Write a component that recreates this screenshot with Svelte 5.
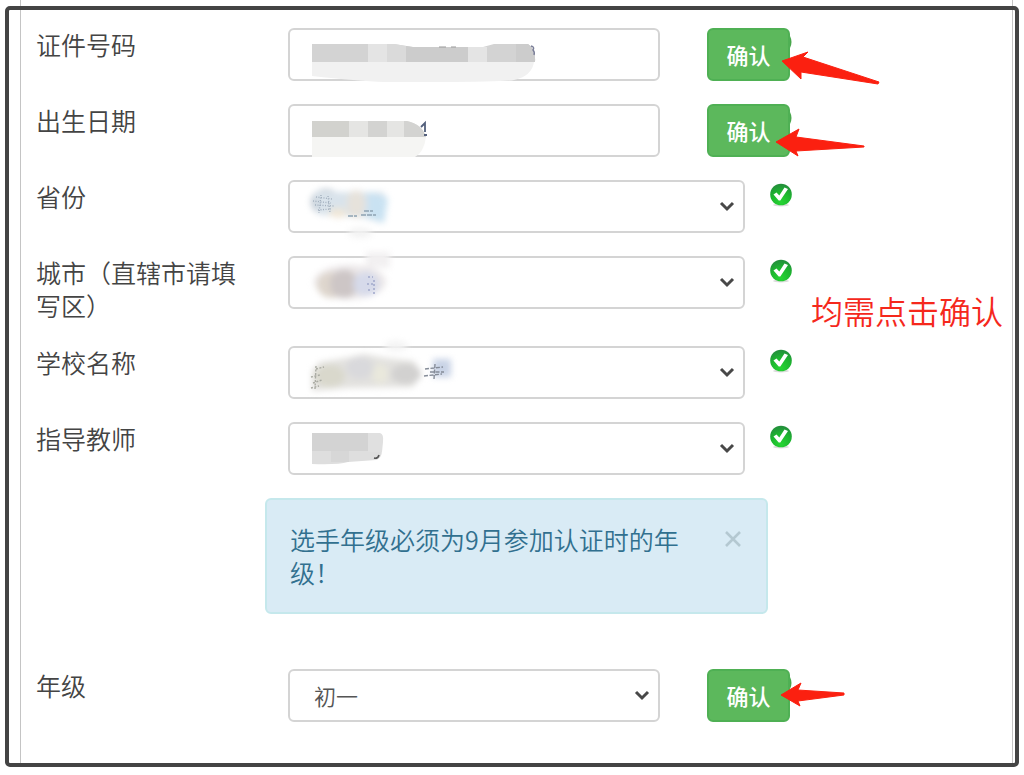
<script>
	const rows = [
		{
			id: 'cert',
			label: '证件号码',
			type: 'input',
			smudge: 'cert',
			arrow: 'M75 33 L101 24 L96 29 L172 54 L171 56 L94 44 L94 51 Z'
		},
		{
			id: 'birth',
			label: '出生日期',
			type: 'input',
			smudge: 'birth',
			arrow: 'M69 38 L92 25 L89 33 L157 42 L157 43 L89 47 L91 52 Z'
		},
		{id: 'province', label: '省份', type: 'select', smudge: 'province'},
		{id: 'city', label: '城市（直辖市请填写区）', type: 'select', smudge: 'city'},
		{id: 'school', label: '学校名称', type: 'select', smudge: 'school'},
		{id: 'teacher', label: '指导教师', type: 'select', smudge: 'teacher'}
	];

	const gradeArrow = 'M74 26 L94 14 L91 21 L137 24 L137 26 L91 32 L93 37 Z';
	const grades = ['初一', '初二', '初三'];

	let grade = '初一';
	let showNotice = true;
</script>

{#snippet chevron()}
	<svg class="chevron" viewBox="0 0 16 11" aria-hidden="true">
		<path d="M2 2 L8 8 L14 2" fill="none" stroke="#484848" stroke-width="3" />
	</svg>
{/snippet}

{#snippet confirm(arrow)}
	<div class="action">
		<button type="button" class="confirm">确认</button>
		<svg class="arrow" viewBox="0 0 180 60" aria-hidden="true">
			<path d="M83 8 Q86 14 83 20 Z" fill="#48a64b" />
			<path d={arrow} fill="#fb2010" stroke="#fb2010" stroke-width="1" stroke-linejoin="round" />
		</svg>
	</div>
{/snippet}

{#snippet smudge(name)}
	<svg class="smudge" viewBox="0 0 280 60" aria-hidden="true">
		{#if name === 'cert'}
			<path d="M24 34 H246 Q244 48 226 52 Q218 54 150 54 H96 Q70 53 24 48 Z" fill="#f1f1f1" />
			<path d="M24 16 H106 L125 19 H195 L206 16 H240 Q248 21 247 34 H24 Z" fill="#d3d3d3" />
			<path d="M80 16 H99 V34 H80 Z M180 19 H199 V34 H180 Z" fill="#e4e4e4" />
			<path d="M99 16 H106 L118 18 V34 H99 Z" fill="#dadada" />
			<path d="M118 18 L125 19 H180 V34 H118 Z M228 16 H240 Q248 21 247 34 H228 Z" fill="#cccccc" />
			<path d="M151 19 H158 M163 19 H168" stroke="#999" />
			<path d="M243 18 Q247 19 245 22 Q247 24 246 27" fill="none" stroke="#7a7e98" stroke-width="1.4" />
		{:else if name === 'birth'}
			<path d="M24 33 H138 Q136 48 127 53 H24 Z" fill="#f5f5f3" />
			<path d="M24 17 H119 Q134 20 138 33 H24 Z" fill="#e5e5e3" />
			<path d="M24 17 H61 V33 H24 Z" fill="#d2d2ce" />
			<path d="M80 17 H99 V33 H80 Z M116 17 H119 Q134 20 138 33 H116 Z" fill="#d3d3d1" />
			<path d="M133 23 L137 19 V28 M136 31 H139" fill="none" stroke="#53607c" stroke-width="1.8" />
		{:else if name === 'province'}
			<g class="haze">
				<ellipse cx="38" cy="22" rx="15" ry="13" fill="#c0cad4" />
				<path d="M27 12 H95 L99 20 L95 43 L76 38 L30 34 Z" fill="#d9e3eb" />
				<path d="M80 12 L100 18 L96 43 L80 37 Z" fill="#c9e2f2" />
				<ellipse cx="68" cy="24" rx="9" ry="14" fill="#e6e2db" />
				<ellipse cx="50" cy="33" rx="9" ry="5" fill="#f0e7d8" />
				<ellipse cx="72" cy="53" rx="12" ry="5" fill="#f2f2f2" />
			</g>
			<path d="M28 17 L44 19 M25 21 L43 23 M27 25 L46 26 M30 30 L43 29 M33 15 L31 33 M40 16 L42 32" stroke="#a3b0be" stroke-width="1.4" stroke-dasharray="1 1.5" />
			<path d="M60 36 H69 M73 35 H88 M76 31 H85" stroke="#8da2b3" stroke-width="1.6" stroke-dasharray="5 1" />
		{:else if name === 'city'}
			<g class="haze">
				<rect x="78" y="-4" width="24" height="16" fill="#f2f0f1" />
				<ellipse cx="62" cy="26" rx="36" ry="17" fill="#ebe7e8" />
				<ellipse cx="44" cy="29" rx="15" ry="13" fill="#ded6cd" />
				<ellipse cx="56" cy="28" rx="14" ry="14" fill="#cdc6c6" />
				<ellipse cx="78" cy="28" rx="13" ry="12" fill="#d6daea" />
			</g>
			<path d="M80 21 H85 M79 28 H87 M80 34 H84 M86 24 V38" stroke="#a3abcc" stroke-width="1.6" stroke-dasharray="2 2" />
		{:else if name === 'school'}
			<g class="haze">
				<path d="M24 25 L32 16 L58 12 L76 8 L98 12 L126 15 L133 28 L125 41 L60 42 L24 45 Z" fill="#e2e1de" />
				<ellipse cx="42" cy="30" rx="15" ry="11" fill="#d9d8cc" />
				<ellipse cx="72" cy="22" rx="14" ry="11" fill="#d9d9dc" />
				<ellipse cx="92" cy="28" rx="8" ry="10" fill="#e9e8dc" />
				<ellipse cx="118" cy="28" rx="15" ry="10" fill="#d2d1d0" />
				<rect x="145" y="13" width="18" height="18" fill="#c9d3e6" />
				<ellipse cx="108" cy="0" rx="12" ry="5" fill="#f3f3f3" />
			</g>
			<path d="M23 31 L32 29 M25 37 L34 34 M28 23 L36 21 M23 42 L31 40 M28 20 L27 43" stroke="#aaaba3" stroke-width="1.4" stroke-dasharray="2 1.5" />
			<path d="M137 23 L155 21 M142 26 H156 M136 30 L154 28 M147 18 L146 33" stroke="#858c98" stroke-width="1.4" stroke-dasharray="4 1.5" />
		{:else if name === 'teacher'}
			<path d="M24 28 H94 Q94 36 88 38 L60 40 Q50 43 24 42 Z" fill="#dedede" />
			<path d="M24 11 H80 V29 H24 Z" fill="#d3d3d3" />
			<path d="M80 11 H92 Q96 12 95 20 L94 30 H80 Z" fill="#e0e0e0" />
			<path d="M43 29 H61 V40 H43 Z" fill="#d7d7d7" />
			<path d="M86 36 Q90 37 91 33" fill="none" stroke="#555" stroke-width="1.6" />
		{/if}
	</svg>
{/snippet}

<div class="page">
	<form class="panel">
		{#each rows as row (row.id)}
			<div class="row" class:wide={row.type === 'select'}>
				<label for={row.id}>{row.label}</label>
				<div class="field">
					{#if row.type === 'input'}
						<input type="text" id={row.id}>
					{:else}
						<select id={row.id}>
							<option value=""></option>
						</select>
						{@render chevron()}
					{/if}
					{@render smudge(row.smudge)}
				</div>

				{#if row.arrow}
					{@render confirm(row.arrow)}
				{:else}
					<svg class="ok" viewBox="0 0 24 24" role="img" aria-label="OK">
						<defs>
							<radialGradient id="ok-{row.id}" cx="50%" cy="85%" r="80%">
								<stop offset="0" stop-color="#25d532" />
								<stop offset="0.6" stop-color="#1db52f" />
								<stop offset="1" stop-color="#23903b" />
							</radialGradient>
						</defs>
						<ellipse cx="12" cy="22" rx="8" ry="1.5" fill="#dcdcdc" />
						<circle cx="12" cy="11.5" r="10.8" fill="url(#ok-{row.id})" />
						<path d="M4.5 11.5 L7.5 9.5 L10.3 12.6 L15.5 4.5 L19 6 L11.3 17.5 L9.7 17.5 Z" fill="#fff" />
					</svg>
				{/if}
			</div>
		{/each}

		{#if showNotice}
			<div class="notice_row">
				<div class="notice" role="alert">
					<p>选手年级必须为9月参加认证时的年级！</p>
					<button type="button" class="close" aria-label="Close" on:click={() => showNotice = false}>
						<svg viewBox="0 0 16 16" aria-hidden="true">
							<path d="M1 1 L15 15 M15 1 L1 15" stroke="#b4c8d1" stroke-width="2.6" />
						</svg>
					</button>
				</div>
			</div>
		{/if}

		<div class="row">
			<label for="grade">年级</label>
			<div class="field">
				<select id="grade" bind:value={grade}>
					{#each grades as item}
						<option value={item}>{item}</option>
					{/each}
				</select>
				{@render chevron()}
			</div>
			{@render confirm(gradeArrow)}
		</div>
	</form>

	<div class="frame"></div>
	<p class="hint">均需点击确认</p>
</div>

<style>
	:global(body) {
		margin: 0;
		background: #fff;
	}

	.page {
		position: relative;
		padding: 0 11px 12px 20px;
		font-family: "Noto Sans CJK SC", sans-serif;
		font-size: 25px;
		font-weight: 350;
		line-height: 33px;
		color: #444;
	}

	.panel {
		display: flex;
		flex-direction: column;
		gap: 24px;
		padding: 28px 0 42px 15px;
		border-left: 1px solid #c4c4c4;
		border-right: 1px solid #c4c4c4;
	}

	.row {
		display: grid;
		grid-template-columns: 252fr 372fr 352fr;
		align-items: start;
	}

	.row.wide {
		grid-template-columns: 252fr 457fr 267fr;
	}

	label {
		padding-right: 40px;
	}

	.field {
		position: relative;
		height: 53px;
		margin-bottom: -1px;
	}

	input,
	select {
		display: block;
		width: 100%;
		height: 100%;
		margin: 0;
		padding: 0 24px;
		box-sizing: border-box;
		border: 2px solid #d4d4d4;
		border-radius: 6px;
		background: #fff;
		color: #555;
		font: inherit;
		font-size: 22px;
		appearance: none;
	}

	.chevron {
		position: absolute;
		right: 10px;
		top: 21px;
		width: 16px;
		height: 11px;
		pointer-events: none;
	}

	.smudge {
		position: absolute;
		left: 0;
		top: 0;
		width: 280px;
		height: 60px;
		overflow: visible;
		pointer-events: none;
	}

	.haze {
		filter: blur(3px);
	}

	.action {
		position: relative;
		padding-left: 47px;
	}

	.confirm {
		display: block;
		width: 83px;
		height: 53px;
		margin-bottom: -1px;
		padding: 0;
		border: 2px solid #4fb054;
		border-radius: 6px;
		background: #5cb85c;
		color: #fff;
		font: inherit;
		font-size: 22px;
		font-weight: 500;
		cursor: pointer;
	}

	.arrow {
		position: absolute;
		left: 47px;
		top: 0;
		width: 180px;
		height: 60px;
		pointer-events: none;
	}

	.ok {
		width: 24px;
		height: 24px;
		margin: 3px 0 0 24px;
	}

	.notice_row {
		display: grid;
		grid-template-columns: 229fr 503fr 244fr;
		margin-bottom: 31px;
	}

	.notice {
		grid-column: 2;
		display: flex;
		align-items: flex-start;
		justify-content: space-between;
		padding: 23px;
		border: 2px solid #c5e8ec;
		border-radius: 6px;
		background: #d9ebf5;
		color: #31708f;
	}

	.notice p {
		max-width: 395px;
		margin: 0;
	}

	.close {
		display: flex;
		margin: 8px 2px 0 0;
		padding: 0;
		border: 0;
		background: none;
		cursor: pointer;
	}

	.close svg {
		width: 16px;
		height: 16px;
	}

	/* marks drawn over the form */
	.frame {
		position: absolute;
		inset: 6px 5px 8px;
		border: 4px solid #444;
		border-radius: 5px;
		pointer-events: none;
	}

	.hint {
		position: absolute;
		right: 21px;
		top: 294px;
		margin: 0;
		color: #f5281c;
		font-size: 32px;
	}
</style>
